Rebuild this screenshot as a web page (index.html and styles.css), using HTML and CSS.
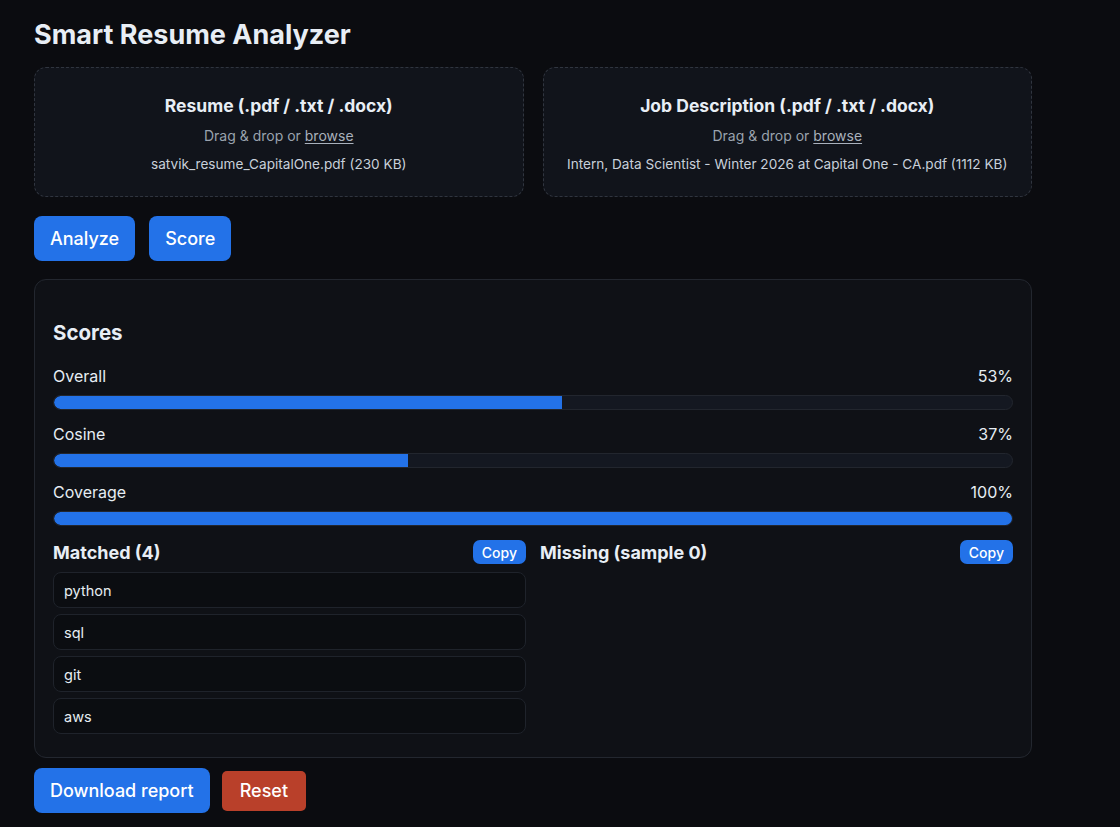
FILE: index.html
```html
<!DOCTYPE html>
<html lang="en">
<head>
<meta charset="utf-8">
<title>Smart Resume Analyzer</title>
<link rel="stylesheet" href="styles.css">
</head>
<body>
<main class="app">
  <h1 class="title">Smart Resume Analyzer</h1>

  <section class="uploads">
    <div class="drop">
      <div class="drop-title">Resume (.pdf / .txt / .docx)</div>
      <div class="drop-hint">Drag &amp; drop or <span class="link">browse</span></div>
      <div class="drop-file">satvik_resume_CapitalOne.pdf (230 KB)</div>
    </div>
    <div class="drop">
      <div class="drop-title">Job Description (.pdf / .txt / .docx)</div>
      <div class="drop-hint">Drag &amp; drop or <span class="link">browse</span></div>
      <div class="drop-file">Intern, Data Scientist - Winter 2026 at Capital One - CA.pdf (1112 KB)</div>
    </div>
  </section>

  <div class="actions">
    <button class="btn btn-primary">Analyze</button>
    <button class="btn btn-primary">Score</button>
  </div>

  <section class="card">
    <h2 class="card-title">Scores</h2>

    <div class="metric">
      <div class="metric-head"><span>Overall</span><span>53%</span></div>
      <div class="bar"><div class="fill" style="width:53%"></div></div>
    </div>
    <div class="metric">
      <div class="metric-head"><span>Cosine</span><span>37%</span></div>
      <div class="bar"><div class="fill" style="width:37%"></div></div>
    </div>
    <div class="metric">
      <div class="metric-head"><span>Coverage</span><span>100%</span></div>
      <div class="bar"><div class="fill" style="width:100%"></div></div>
    </div>

    <div class="lists">
      <div class="list-col">
        <div class="list-head">
          <h3 class="list-title">Matched (4)</h3>
          <button class="btn-copy">Copy</button>
        </div>
        <ul class="items">
          <li class="item">python</li>
          <li class="item">sql</li>
          <li class="item">git</li>
          <li class="item">aws</li>
        </ul>
      </div>
      <div class="list-col">
        <div class="list-head">
          <h3 class="list-title">Missing (sample 0)</h3>
          <button class="btn-copy">Copy</button>
        </div>
        <ul class="items"></ul>
      </div>
    </div>
  </section>

  <div class="footer-actions">
    <button class="btn btn-primary">Download report</button>
    <button class="btn btn-danger">Reset</button>
  </div>
</main>
</body>
</html>
```

FILE: styles.css
```css
* { box-sizing: border-box; }

html, body {
  margin: 0;
  padding: 0;
  background: #0b0c10;
  color: #e6edf3;
  font-family: Inter, "Noto Sans", "Liberation Sans", sans-serif;
}

.app {
  width: 998px;
  margin-left: 34px;
  padding-top: 19px;
}

.title {
  margin: 0 0 16px 0;
  font-size: 27px;
  line-height: 32px;
  font-weight: 700;
  color: #e8eef5;
}

.uploads {
  display: grid;
  grid-template-columns: 1fr 1fr;
  gap: 19px;
}

.drop {
  height: 130px;
  border: 1px dashed #30353f;
  border-radius: 12px;
  background: #11141b;
  display: flex;
  flex-direction: column;
  align-items: center;
  padding-top: 27px;
  text-align: center;
}

.drop-title {
  font-size: 17.5px;
  line-height: 22px;
  font-weight: 700;
  color: #e8eef5;
}

.drop-hint {
  margin-top: 9px;
  font-size: 14px;
  line-height: 20px;
  color: #9aa3ae;
}

.link {
  text-decoration: underline;
  text-underline-offset: 2px;
  color: #a9b1bc;
}

.drop-file {
  margin-top: 8px;
  font-size: 13.6px;
  line-height: 20px;
  color: #c8d0da;
}

.actions {
  display: flex;
  gap: 14px;
  margin-top: 19px;
}

.btn {
  border: none;
  font-family: inherit;
  font-size: 18px;
  font-weight: 500;
  color: #ffffff;
  cursor: pointer;
}

.btn-primary {
  height: 45px;
  padding: 0 16px;
  border-radius: 8px;
  background: #2372e8;
}

.btn-danger {
  height: 40px;
  padding: 0 18px;
  border-radius: 5px;
  background: #b9402a;
}

.card {
  margin-top: 18px;
  border: 1px solid #23272f;
  border-radius: 12px;
  background: #0f1116;
  padding: 18px 18px 23px 18px;
}

.card-title {
  margin: 22px 0 21px 0;
  font-size: 20.5px;
  line-height: 25px;
  font-weight: 700;
  color: #e8eef5;
}

.metric {
  margin-bottom: 14px;
}

.metric-head {
  display: flex;
  justify-content: space-between;
  font-size: 16px;
  line-height: 20px;
  color: #e6edf3;
}

.bar {
  margin-top: 9px;
  height: 15px;
  border-radius: 8px;
  background: #141821;
  border: 1px solid #22262e;
  overflow: hidden;
}

.fill {
  height: 100%;
  background: #2372e8;
  border-radius: 8px 0 0 8px;
}

.lists {
  display: grid;
  grid-template-columns: 1fr 1fr;
  gap: 14px;
}

.list-head {
  display: flex;
  justify-content: space-between;
  align-items: center;
  height: 24px;
}

.list-title {
  margin: 0;
  font-size: 18px;
  font-weight: 700;
  color: #e8eef5;
}

.btn-copy {
  height: 24px;
  padding: 0 9px;
  border: none;
  border-radius: 7px;
  background: #2372e8;
  color: #ffffff;
  font-family: inherit;
  font-size: 14px;
  font-weight: 500;
}

.items {
  list-style: none;
  margin: 8px 0 0 0;
  padding: 0;
  display: flex;
  flex-direction: column;
  gap: 6px;
}

.item {
  height: 36px;
  display: flex;
  align-items: center;
  padding: 0 10px;
  border: 1px solid #1f232b;
  border-radius: 8px;
  background: #0b0d11;
  font-size: 14.5px;
  color: #e6edf3;
}

.footer-actions {
  display: flex;
  align-items: center;
  gap: 12px;
  margin-top: 10px;
}
```
